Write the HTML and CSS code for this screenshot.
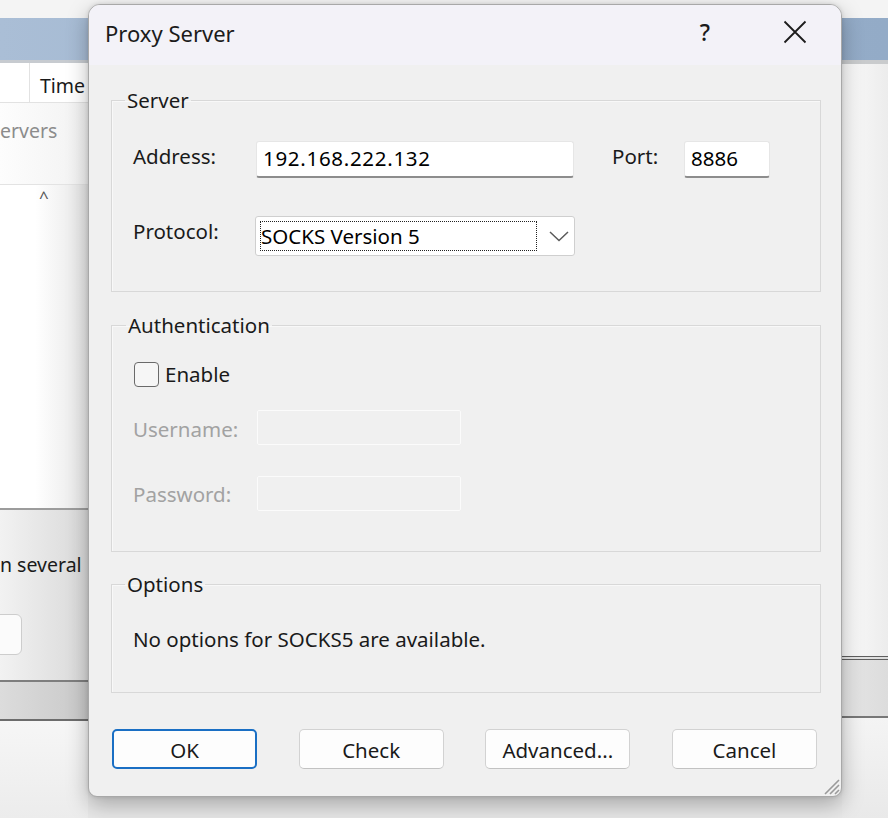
FILE: index.html
```html
<!DOCTYPE html>
<html lang="en">
<head>
<meta charset="utf-8">
<title>Proxy Server</title>
<link rel="stylesheet" href="styles.css">
</head>
<body>
<div class="desk">
  <div class="bd-top"></div>
  <div class="bd-title"></div>
  <div class="bd-panels">
    <div class="bd-left">
      <div class="bl-head"><div class="bl-cell"></div><div class="bl-time">Time</div></div>
      <div class="bl-filter">ervers</div>
      <div class="bl-list"><span class="bl-caret">^</span></div>
      <div class="bl-lower">
        <div class="bl-note">n several</div>
        <div class="bl-btn"></div>
      </div>
      <div class="bl-band"></div>
      <div class="bl-foot"></div>
    </div>
    <div class="bd-mid"></div>
    <div class="bd-right">
      <div class="br-main"></div>
      <div class="br-band"></div>
      <div class="br-foot"></div>
    </div>
  </div>
</div>

<div class="dialog">
  <div class="dlg-title">
    <span class="dlg-caption">Proxy Server</span>
    <div class="cap-btn help">?</div>
    <div class="cap-btn close">
      <svg width="24" height="24" viewBox="0 0 24 24"><path d="M1.5 1.5 L22.5 22.5 M22.5 1.5 L1.5 22.5" stroke="#1c1c1c" stroke-width="1.8" fill="none"/></svg>
    </div>
  </div>
  <div class="dlg-body">
    <fieldset class="group server">
      <legend>Server</legend>
      <div class="server-grid">
        <div class="lbl">Address:</div>
        <div class="textbox addr">192.168.222.132</div>
        <div class="lbl port-lbl">Port:</div>
        <div class="textbox port">8886</div>
        <div class="lbl">Protocol:</div>
        <div class="combo">
          <span class="focus">SOCKS Version 5</span>
          <svg class="chev" width="20" height="11" viewBox="0 0 20 11"><path d="M1 1 L10 9.5 L19 1" stroke="#5a5a5a" stroke-width="1.5" fill="none"/></svg>
        </div>
      </div>
    </fieldset>

    <fieldset class="group auth">
      <legend>Authentication</legend>
      <div class="check-row"><span class="checkbox"></span><span>Enable</span></div>
      <div class="field-row user"><span class="lbl dis">Username:</span><span class="textbox off"></span></div>
      <div class="field-row pass"><span class="lbl dis">Password:</span><span class="textbox off"></span></div>
    </fieldset>

    <fieldset class="group options">
      <legend>Options</legend>
      <div class="opt-text">No options for SOCKS5 are available.</div>
    </fieldset>

    <div class="buttons">
      <div class="btn default">OK</div>
      <div class="btn">Check</div>
      <div class="btn">Advanced...</div>
      <div class="btn">Cancel</div>
    </div>
  </div>
  <svg class="grip" width="20" height="20" viewBox="0 0 20 20"><path d="M19 5 L5 19 M19 10 L10 19 M19 15 L15 19" stroke="#9a9a9a" stroke-width="1.6" fill="none"/></svg>
</div>
</body>
</html>
```

FILE: styles.css
```css
* { box-sizing: border-box; }
html, body { margin: 0; padding: 0; }
body {
  width: 888px;
  height: 818px;
  overflow: hidden;
  position: relative;
  font-family: "Noto Sans", "Open Sans", sans-serif;
  font-size: 20.5px;
  color: #1a1a1a;
  background: #f1f1f1;
}

/* ---------- backdrop window ---------- */
.desk { display: flex; flex-direction: column; height: 818px; }
.bd-top { height: 18px; background: #f4f4f4; }
.bd-title { height: 42px; background: linear-gradient(to right, #aabed6, #98b0cb 60%, #93abc7); }
.bd-panels { flex: 1; display: flex; }
.bd-left { width: 88px; flex: none; display: flex; flex-direction: column; font-size: 19.5px; }
.bd-mid { flex: 1; background: #e8e8e8; }
.bd-right { width: 46px; flex: none; display: flex; flex-direction: column; }

.bl-head {
  height: 43px;
  display: flex;
  background: #fff;
  border-top: 3px solid #c7cbd0;
  border-bottom: 1px solid #e2e2e2;
}
.bl-cell { width: 30px; border-right: 1px solid #e2e2e2; }
.bl-time { padding-left: 10px; line-height: 34px; padding-top: 6px; color: #1a1a1a; white-space: nowrap; }
.bl-filter {
  height: 82px;
  background: linear-gradient(to right, #fdfdfd, #f2f2f2);
  border-bottom: 1px solid #e3e3e3;
  color: #8c8c8c;
  line-height: 28px;
  padding-top: 14px;
  white-space: nowrap;
}
.bl-list {
  height: 325px;
  background: linear-gradient(to right, #ffffff 40%, #e6e6e6);
  border-bottom: 2px solid #9c9c9c;
  padding-left: 39px;
}
.bl-caret { display: block; font-size: 17px; line-height: 20px; color: #555; padding-top: 2px; }
.bl-lower {
  height: 170px;
  background: linear-gradient(to right, #f2f2f2, #d9d9d9);
  padding-top: 41px;
}
.bl-note { line-height: 28px; white-space: nowrap; color: #1a1a1a; }
.bl-btn {
  margin-top: 35px;
  margin-left: -50px;
  width: 72px;
  height: 41px;
  border: 1px solid #cdcdcd;
  border-radius: 6px;
  background: #fbfbfb;
}
.bl-band {
  height: 41px;
  border-top: 2px solid #7e7e7e;
  border-bottom: 2px solid #6c6c6c;
  background: linear-gradient(to right, #dcdcdc, #c9c9c9);
}
.bl-foot { flex: 1; background: linear-gradient(to bottom, #f6f6f6, #ececec); }

.br-main {
  height: 596px;
  border-top: 4px solid #c9cbcd;
  background: linear-gradient(to right, #fbfbfb, #ececec);
}
.br-band {
  height: 62px;
  border-top: 4px double #5e5e5e;
  border-bottom: 2px solid #777;
  background: linear-gradient(to right, #e6e6e6, #dcdcdc);
}
.br-foot { flex: 1; background: linear-gradient(to bottom, #f4f4f4, #e9e9e9); }

/* ---------- dialog ---------- */
.dialog {
  position: absolute;
  left: 88px;
  top: 4px;
  width: 754px;
  height: 793px;
  background: #f0f0f0;
  border: 1px solid #a8a8a8;
  border-radius: 12px 12px 9px 9px;
  box-shadow: 0 8px 22px rgba(0, 0, 0, 0.28), 0 0 4px rgba(0, 0, 0, 0.12);
  display: flex;
  flex-direction: column;
  overflow: hidden;
}
.dlg-title {
  height: 60px;
  flex: none;
  display: flex;
  align-items: center;
  background: #f3f2f8;
}
.dlg-caption {
  flex: 1;
  padding-left: 16px;
  font-size: 22px;
  color: #1b1b1b;
  padding-bottom: 5px;
}
.cap-btn {
  height: 60px;
  display: flex;
  align-items: center;
  justify-content: center;
}
.help { width: 86px; font-size: 23px; font-weight: 500; color: #1b1b1b; padding-bottom: 6px; }
.close { width: 93px; padding-bottom: 6px; }

.dlg-body {
  flex: 1;
  padding: 0 20px 0 22px;
  display: flex;
  flex-direction: column;
}

.group {
  margin: 0;
  border: 1px solid #d8d8d8;
  box-shadow: inset 1px 1px 0 #f8f8f8;
  min-inline-size: 0;
}
.group legend {
  margin-left: -8px;
  padding: 0 2px;
  line-height: 28px;
  color: #1a1a1a;
}
.lbl { color: #1a1a1a; white-space: nowrap; }
.lbl.dis { color: #a2a2a2; }

.server { margin-top: 21px; padding: 27px 0 35px 21px; }
.server-grid {
  display: grid;
  grid-template-columns: 123px 318px 110px 86px;
  grid-template-rows: 37px 40px;
  row-gap: 38px;
  align-items: center;
}
.server-grid .lbl { align-self: start; line-height: 28px; margin-top: 1px; }
.port-lbl { padding-left: 38px; }
.textbox {
  height: 37px;
  background: #fff;
  border: 1px solid #e6e6e6;
  border-bottom: 2px solid #8d8d8d;
  border-radius: 3px;
  line-height: 33px;
  padding-left: 6px;
  color: #000;
}
.textbox.addr { letter-spacing: 0.7px; }
.combo {
  grid-column: 2 / span 3;
  width: 320px;
  height: 40px;
  margin-left: -1px;
  background: #fff;
  border: 1px solid #cfcfcf;
  border-radius: 3px;
  display: flex;
  align-items: center;
  padding-left: 4px;
}
.focus {
  width: 277px;
  height: 30px;
  border: 1px dotted #222;
  line-height: 28px;
  color: #000;
  white-space: nowrap;
  overflow: hidden;
}
.chev { margin-left: 12px; }

.auth { margin-top: 19px; padding: 21px 0 40px 22px; }
.check-row { height: 28px; display: flex; align-items: center; gap: 6px; }
.checkbox {
  width: 25px;
  height: 25px;
  border: 1.5px solid #6a6a6a;
  border-radius: 4px;
  background: #f6f6f6;
}
.field-row { display: flex; align-items: center; height: 35px; }
.field-row .lbl { width: 124px; margin-left: -1px; }
.field-row.user { margin-top: 22px; }
.field-row.user .lbl { padding-top: 3px; }
.field-row.pass { margin-top: 31px; }
.textbox.off {
  width: 204px;
  height: 35px;
  background: #f0f0f0;
  border: 1.5px solid #fbfbfb;
  border-radius: 2px;
}

.options { margin-top: 18px; padding: 27px 0 39px 21px; }
.opt-text { line-height: 28px; color: #1a1a1a; }

.buttons {
  margin: 36px 4px 0 1px;
  display: flex;
  justify-content: space-between;
}
.btn {
  width: 145px;
  height: 40px;
  background: #fdfdfd;
  border: 1px solid #d2d2d2;
  border-bottom-color: #c2c2c2;
  border-radius: 5px;
  display: flex;
  align-items: center;
  justify-content: center;
  color: #1a1a1a;
  padding-top: 2px;
}
.btn.default { border: 2px solid #1a6fc4; }

.grip { position: absolute; right: 1px; bottom: 1px; }
```
